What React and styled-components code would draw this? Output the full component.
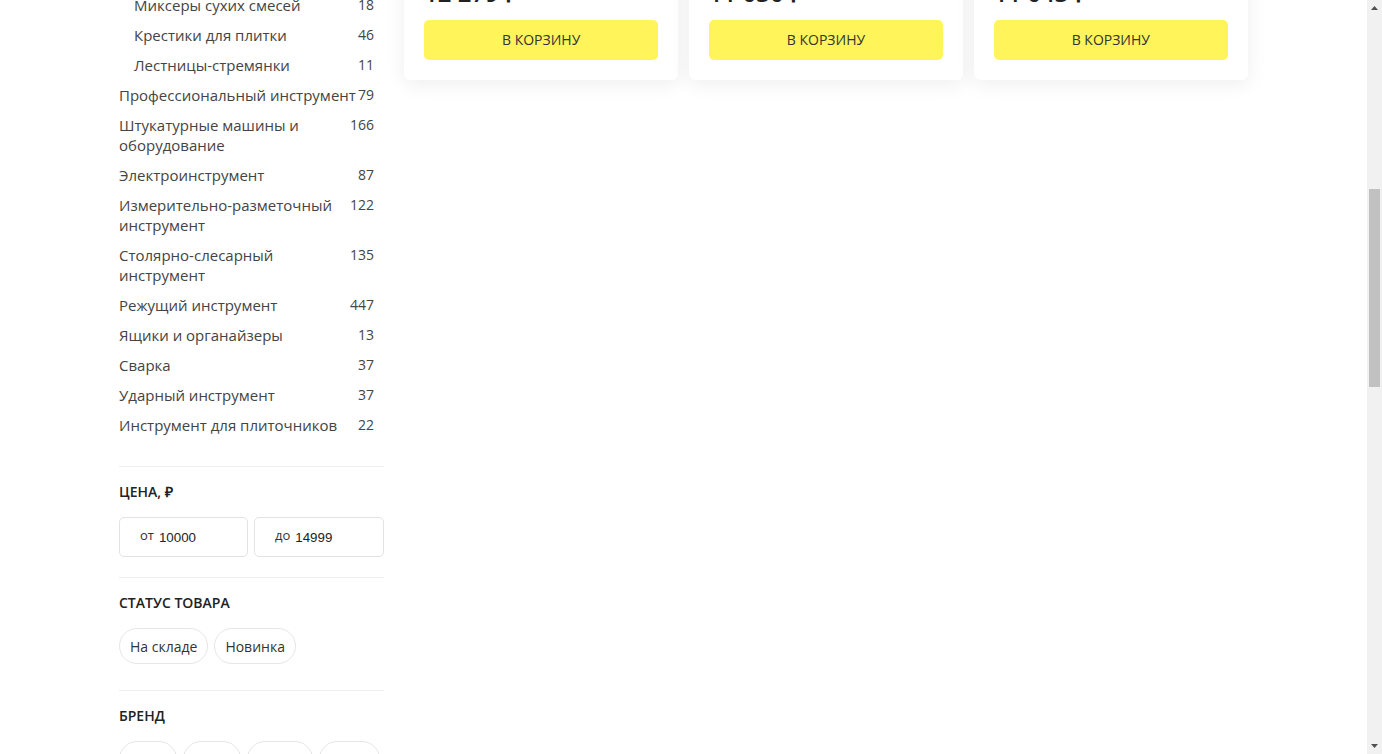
import React, { useLayoutEffect, useRef, useState } from 'react'
import styled, { createGlobalStyle } from 'styled-components'

const GlobalStyle = createGlobalStyle`
  html, body {
    margin: 0;
    height: 100%;
    overflow: hidden;
    background: #fff;
  }
  body {
    font-family: 'Open Sans', 'Liberation Sans', sans-serif;
    color: #333;
  }
  * { box-sizing: border-box; }
`

const categories = [
  { name: 'Садовый инструмент', count: 58 },
  { name: 'Расходные материалы', count: 214 },
  { name: 'Крепеж', count: 96 },
  { name: 'Строительный инструмент', count: 389 },
  { name: 'Шпатели', count: 64, sub: true },
  { name: 'Кельмы', count: 38, sub: true },
  { name: 'Терки и полутерки', count: 52, sub: true },
  { name: 'Валики', count: 41, sub: true },
  { name: 'Кисти', count: 57, sub: true },
  { name: 'Правила', count: 23, sub: true },
  { name: 'Уровни строительные', count: 36, sub: true },
  { name: 'Ведра и емкости', count: 19, sub: true },
  { name: 'Затирки', count: 14, sub: true },
  { name: 'Гладилки', count: 27, sub: true },
  { name: 'Миксеры сухих смесей', count: 18, sub: true },
  { name: 'Крестики для плитки', count: 46, sub: true },
  { name: 'Лестницы-стремянки', count: 11, sub: true },
  { name: 'Профессиональный инструмент', count: 79, anchor: true },
  { name: 'Штукатурные машины и оборудование', count: 166 },
  { name: 'Электроинструмент', count: 87 },
  { name: 'Измерительно-разметочный инструмент', count: 122 },
  { name: 'Столярно-слесарный инструмент', count: 135 },
  { name: 'Режущий инструмент', count: 447 },
  { name: 'Ящики и органайзеры', count: 13 },
  { name: 'Сварка', count: 37 },
  { name: 'Ударный инструмент', count: 37 },
  { name: 'Инструмент для плиточников', count: 22 },
]

const products = [
  { name: 'Штукатурная станция компактная, 220 В', price: '12 279 ₽' },
  { name: 'Миксер строительный двухскоростной', price: '11 030 ₽' },
  { name: 'Затирочная машина по бетону', price: '11 043 ₽' },
]

const brands = ['Ryobi', 'Kress', 'Makita', 'Bosch', 'Kraftool', 'Stayer', 'Hammer', 'Fubag']
const materials = ['Сталь', 'Пластик', 'Алюминий', 'Резина', 'Дерево']
const countries = ['Россия', 'Китай', 'Германия', 'Япония', 'Италия']

const App = () => {
  const scroller = useRef(null)
  const anchor = useRef(null)
  const track = useRef(null)
  const [thumb, setThumb] = useState({ top: 0, height: 0 })

  useLayoutEffect(() => {
    const box = scroller.current
    const row = anchor.current
    if (!box || !row) return
    const offset = row.getBoundingClientRect().top - box.getBoundingClientRect().top + box.scrollTop
    box.scrollTop = offset - 85
    const trackLen = track.current ? track.current.clientHeight : box.clientHeight - 30
    const height = Math.round(trackLen * box.clientHeight / box.scrollHeight)
    const top = Math.round((trackLen - height) * box.scrollTop / (box.scrollHeight - box.clientHeight))
    setThumb({ top, height })
  }, [])

  return (
    <Frame>
      <GlobalStyle />
      <Scroller ref={scroller}>
        <Header>
          <HeaderInner>
            <Logo>
              <svg width="34" height="34" viewBox="0 0 34 34">
                <rect width="34" height="34" rx="6" fill="#fff55a" />
                <path d="M9 24 L17 9 L25 24 Z" fill="none" stroke="#222" strokeWidth="2.5" />
              </svg>
              <span>СтройМастер</span>
            </Logo>
            <Search placeholder="Поиск по каталогу" />
            <Phone>8 800 555-35-35</Phone>
          </HeaderInner>
        </Header>

        <Main>
          <Title>Инструмент</Title>
          <Layout>
            <Sidebar>
              <SideHeading>КАТЕГОРИИ</SideHeading>
              <CategoryList>
                {categories.map((c) => (
                  <CategoryRow key={c.name} $sub={c.sub} ref={c.anchor ? anchor : undefined}>
                    <CategoryName>{c.name}</CategoryName>
                    <CategoryCount>{c.count}</CategoryCount>
                  </CategoryRow>
                ))}
              </CategoryList>

              <FilterSection>
                <SideHeading>ЦЕНА, ₽</SideHeading>
                <PriceRow>
                  <PriceBox>
                    <PriceLabel>от</PriceLabel>
                    <PriceInput defaultValue="10000" />
                  </PriceBox>
                  <PriceBox>
                    <PriceLabel>до</PriceLabel>
                    <PriceInput defaultValue="14999" />
                  </PriceBox>
                </PriceRow>
              </FilterSection>

              <FilterSection>
                <SideHeading>СТАТУС ТОВАРА</SideHeading>
                <ChipList>
                  <Chip>На складе</Chip>
                  <Chip>Новинка</Chip>
                </ChipList>
              </FilterSection>

              <FilterSection>
                <SideHeading>БРЕНД</SideHeading>
                <ChipList>
                  {brands.map((b) => <Chip key={b}>{b}</Chip>)}
                </ChipList>
              </FilterSection>

              <FilterSection>
                <SideHeading>МАТЕРИАЛ</SideHeading>
                <ChipList>
                  {materials.map((b) => <Chip key={b}>{b}</Chip>)}
                </ChipList>
              </FilterSection>

              <FilterSection>
                <SideHeading>СТРАНА ПРОИЗВОДСТВА</SideHeading>
                <ChipList>
                  {countries.map((b) => <Chip key={b}>{b}</Chip>)}
                </ChipList>
              </FilterSection>

              <Actions>
                <CartButton>Показать</CartButton>
                <ResetButton>Сбросить фильтры</ResetButton>
              </Actions>
            </Sidebar>

            <Products>
              <SortBar>
                <span>Сортировка: <b>по популярности</b></span>
                <span>Найдено 3 товара</span>
              </SortBar>
              <Grid>
                {products.map((p) => (
                  <Card key={p.price}>
                    <Picture>
                      <svg width="120" height="120" viewBox="0 0 120 120">
                        <rect x="20" y="40" width="80" height="50" rx="8" fill="#ddd" />
                        <circle cx="45" cy="95" r="10" fill="#ccc" />
                        <circle cx="80" cy="95" r="10" fill="#ccc" />
                      </svg>
                    </Picture>
                    <ProductName>{p.name}</ProductName>
                    <Price>{p.price}</Price>
                    <CartButton>В корзину</CartButton>
                  </Card>
                ))}
              </Grid>
            </Products>
          </Layout>
        </Main>

        <Footer>
          <FooterInner>
            <span>© СтройМастер</span>
            <span>Каталог · Доставка · Контакты</span>
          </FooterInner>
        </Footer>
      </Scroller>

      <ScrollRail>
        <ArrowButton>
          <svg width="15" height="15" viewBox="0 0 15 15">
            <path d="M4 10 L7.5 6 L11 10 Z" fill="#505050" />
          </svg>
        </ArrowButton>
        <Track ref={track}>
          <Thumb style={{ marginTop: thumb.top, height: thumb.height }} />
        </Track>
        <ArrowButton>
          <svg width="15" height="15" viewBox="0 0 15 15">
            <path d="M4 5 L7.5 9 L11 5 Z" fill="#505050" />
          </svg>
        </ArrowButton>
      </ScrollRail>
    </Frame>
  )
}

export default App

const Frame = styled.div`
  display: flex;
  height: 100vh;
`

const Scroller = styled.div`
  flex: 1;
  min-width: 0;
  height: 100%;
  overflow-y: scroll;
  background: #fff;
  scrollbar-width: none;

  &::-webkit-scrollbar {
    display: none;
  }
`

const ScrollRail = styled.div`
  width: 15px;
  flex-shrink: 0;
  display: flex;
  flex-direction: column;
  background: #f1f1f1;
`

const ArrowButton = styled.div`
  height: 15px;
  flex-shrink: 0;
  display: flex;
`

const Track = styled.div`
  flex: 1;
  display: flex;
  flex-direction: column;
  align-items: center;
`

const Thumb = styled.div`
  width: 11px;
  background: #c1c1c1;
`

const Header = styled.header`
  height: 120px;
  border-bottom: 1px solid #eee;
`

const HeaderInner = styled.div`
  width: 1129px;
  margin: 0 auto;
  height: 100%;
  display: flex;
  align-items: center;
  gap: 40px;
`

const Logo = styled.div`
  display: flex;
  align-items: center;
  gap: 10px;
  font-size: 20px;
  font-weight: 700;
  color: #222;
`

const Search = styled.input`
  flex: 1;
  height: 40px;
  border: 1px solid #e3e3e3;
  border-radius: 5px;
  padding: 0 16px;
  font-family: 'Open Sans', sans-serif;
  font-size: 14px;
`

const Phone = styled.div`
  font-size: 16px;
  font-weight: 600;
`

const Main = styled.main`
  width: 1129px;
  margin: 0 auto;
  padding: 30px 0 60px;
`

const Title = styled.h1`
  margin: 0 0 20px;
  font-size: 30px;
  line-height: 40px;
  font-weight: 600;
  color: #222;
`

const Layout = styled.div`
  display: flex;
  align-items: flex-start;
  gap: 20px;
`

const Sidebar = styled.aside`
  width: 265px;
  flex-shrink: 0;
`

const SideHeading = styled.div`
  font-size: 14px;
  line-height: 20px;
  font-weight: 600;
  color: #222;
  margin-bottom: 15px;
`

const CategoryList = styled.div`
  margin-top: -7px;
  padding: 0 10px 21px 0;
`

const CategoryRow = styled.div`
  display: flex;
  justify-content: space-between;
  align-items: flex-start;
  gap: 2px;
  margin-bottom: 10px;
  padding-left: ${(p) => (p.$sub ? '15px' : '0')};
`

const CategoryName = styled.span`
  flex: 1;
  font-size: 15px;
  line-height: 20px;
  color: #444;
`

const CategoryCount = styled.span`
  flex-shrink: 0;
  font-size: 14px;
  line-height: 20px;
  color: #444;
`

const FilterSection = styled.div`
  border-top: 1px solid #eeeeee;
  padding: 15px 0 20px;
`

const PriceRow = styled.div`
  display: grid;
  grid-template-columns: 129px 130px;
  gap: 6px;
`

const PriceBox = styled.label`
  display: flex;
  align-items: center;
  height: 40px;
  padding: 0 12px 0 20px;
  border: 1px solid #e3e3e3;
  border-radius: 5px;
  background: #fff;
`

const PriceLabel = styled.span`
  font-size: 13px;
  color: #333;
  margin-bottom: 4px;
`

const PriceInput = styled.input`
  width: 100%;
  min-width: 0;
  margin-left: 5px;
  padding: 0;
  border: none;
  outline: none;
  background: transparent;
  font-family: 'Liberation Sans', Arial, sans-serif;
  font-size: 13.33px;
  color: #222;
`

const ChipList = styled.div`
  display: flex;
  flex-wrap: wrap;
  gap: 6px;
  padding-bottom: 6px;
`

const Chip = styled.button`
  height: 36px;
  padding: 0 10px;
  border: 1px solid #e6e6e6;
  border-radius: 18px;
  background: #fff;
  font-family: 'Open Sans', sans-serif;
  font-size: 14px;
  color: #333;
`

const Actions = styled.div`
  border-top: 1px solid #eeeeee;
  padding-top: 20px;
  display: flex;
  flex-direction: column;
  gap: 10px;
`

const ResetButton = styled.button`
  height: 40px;
  border: 1px solid #e3e3e3;
  border-radius: 5px;
  background: #fff;
  font-family: 'Open Sans', sans-serif;
  font-size: 14px;
  color: #333;
`

const Products = styled.section`
  flex: 1;
  min-width: 0;
`

const SortBar = styled.div`
  height: 40px;
  margin-bottom: 20px;
  display: flex;
  align-items: center;
  justify-content: space-between;
  font-size: 14px;
  color: #555;
`

const Grid = styled.div`
  display: grid;
  grid-template-columns: repeat(3, 1fr);
  gap: 10.5px;
`

const Card = styled.div`
  display: flex;
  flex-direction: column;
  padding: 20px;
  background: #fff;
  border-radius: 6px;
  box-shadow: 0 4px 20px rgba(0, 0, 0, 0.07);
`

const Picture = styled.div`
  height: 286px;
  margin-bottom: 15px;
  border-radius: 4px;
  background: #f6f6f6;
  display: flex;
  align-items: center;
  justify-content: center;
`

const ProductName = styled.div`
  height: 40px;
  margin-bottom: 10px;
  font-size: 14px;
  line-height: 20px;
  color: #333;
  overflow: hidden;
`

const Price = styled.div`
  font-size: 24px;
  line-height: 30px;
  font-weight: 600;
  color: #222;
  margin-bottom: 12px;
`

const CartButton = styled.button`
  width: 100%;
  height: 40px;
  border: none;
  border-radius: 5px;
  background: #fff55a;
  font-family: 'Open Sans', sans-serif;
  font-size: 14px;
  line-height: 19px;
  padding: 0 0 1px;
  color: #333;
  text-transform: uppercase;
  cursor: pointer;
`

const Footer = styled.footer`
  min-height: 726px;
  background: #2b2b2b;
  color: #aaa;
`

const FooterInner = styled.div`
  width: 1129px;
  margin: 0 auto;
  padding: 40px 0;
  display: flex;
  justify-content: space-between;
  font-size: 14px;
`
